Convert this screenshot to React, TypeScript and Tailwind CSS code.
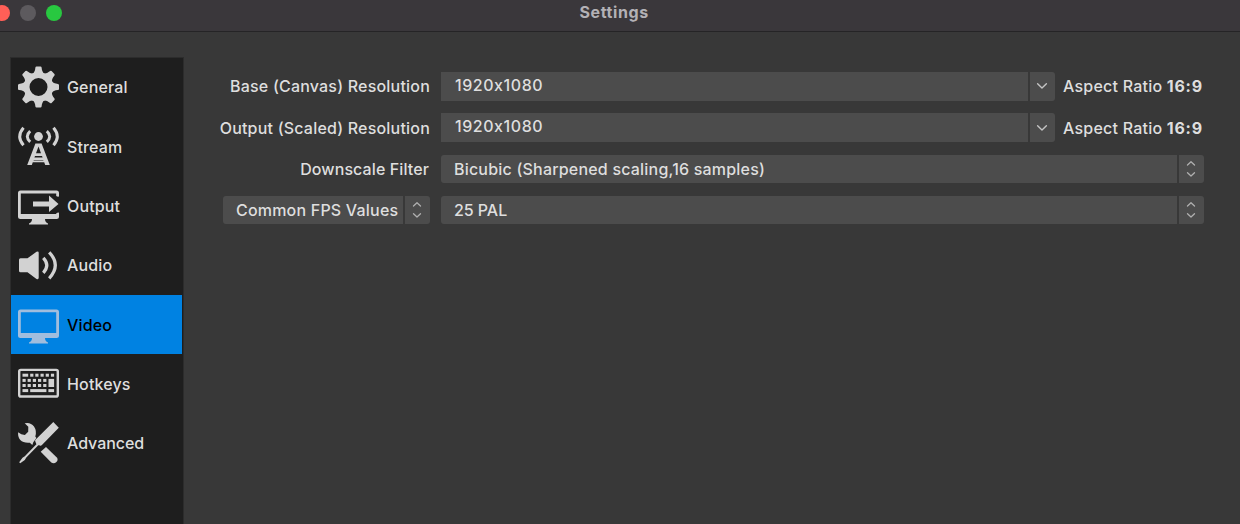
import type { ReactNode } from "react";

const INK = "#d2d2d2";

function Icon({ children }: { children: ReactNode }) {
  return (
    <svg width="42" height="42" viewBox="0 0 42 42" fill={INK} className="shrink-0 overflow-visible">
      {children}
    </svg>
  );
}

function GearIcon() {
  return (
    <Icon>
      {[0, 45, 90, 135, 180, 225, 270, 315].map((a) => (
        <path key={a} transform={`rotate(${a} 20.5 21)`} d="M14 8.5Q17.1 6.2 17.4 1.5Q17.6.5 18.5.5H22.5Q23.4.5 23.6 1.5Q23.9 6.2 27 8.5Z" />
      ))}
      <circle cx="20.5" cy="21" r="11.9" fill="none" stroke={INK} strokeWidth="5.8" />
    </Icon>
  );
}

function StreamIcon() {
  return (
    <Icon>
      <circle cx="20.5" cy="10.5" r="4.4" />
      <g fill="none" stroke={INK} strokeWidth="3">
        <path d="M5.5 1.7Q-2 10.5 5.5 19.3M35.5 1.7Q43 10.5 35.5 19.3" />
        <path d="M12.2 5.2Q6.4 10.5 12.2 15.8M28.8 5.2Q34.6 10.5 28.8 15.8" />
      </g>
      <path fillRule="evenodd" d="M17.4 17.4H23.6L31.8 39H27.2L26.2 36.3H14.8L13.8 39H9.2ZM20.5 20.5L18 27.2H23ZM17 30L16.4 31.6H24.6L24 30ZM15.9 33.9L15.4 34.6H25.6L25.1 33.9Z" />
    </Icon>
  );
}

function OutputIcon() {
  return (
    <Icon>
      <g transform="translate(0 .6)">
        <path fillRule="evenodd" d="M2.5 5H38.5Q41 5 41 7.5V13L38.2 10.5V7.8H2.8V28.5H38.2V28L41 25.5V31Q41 33.5 38.5 33.5H27Q27 36.5 30 38V39H11V38Q14 36.5 14 33.5H2.5Q0 33.5 0 31V7.5Q0 5 2.5 5Z" />
        <path d="M38 11H42V27H38Z" fill="#1e1e1e" />
        <path d="M15 15.8H31V10L40.5 18.3L31 26.5V20.8H15Z" />
      </g>
    </Icon>
  );
}

function AudioIcon() {
  return (
    <Icon>
      <g transform="translate(0 .8)">
        <path d="M2.5 13.5H9.5L18.5 7Q20.7 6 20.7 8V33Q20.7 35 18.5 34.2L9.5 27.5H2.5Q1 27.5 1 26V15Q1 13.5 2.5 13.5Z" />
        <path fill="none" stroke={INK} strokeWidth="3.2" d="M25.3 13Q32.3 20.5 25.3 28M31.2 7.5Q43.4 20.5 31.2 33.5" />
      </g>
    </Icon>
  );
}

function VideoIcon() {
  return (
    <svg width="42" height="42" viewBox="0 0 42 42" fill="#a1bddd" className="shrink-0">
      <path transform="translate(0 .5)" fillRule="evenodd" d="M2.5 5H38.5Q41 5 41 7.5V31Q41 33.5 38.5 33.5H27Q27 36.5 30 38V39H11V38Q14 36.5 14 33.5H2.5Q0 33.5 0 31V7.5Q0 5 2.5 5ZM2.8 7.8V28.5H38.2V7.8Z" />
    </svg>
  );
}

const KEYS: [number, number, number][] = [
  [4.5, 11.2, 5.7], [12.2, 11.2, 3.2], [17.3, 11.2, 3.2], [22.5, 11.2, 3.2], [27.7, 11.2, 3.2], [32.9, 11.2, 3.2],
  [4.5, 16.4, 3.2], [9.6, 16.4, 3.2], [14.8, 16.4, 3.2], [20, 16.4, 3.2], [25.2, 16.4, 3.2],
  [4.5, 21.5, 3.2], [9.6, 21.5, 3.2], [14.8, 21.5, 3.2], [20, 21.5, 3.2], [25.2, 21.5, 3.2],
  [4.5, 26.6, 5.7], [12.2, 26.6, 16.2], [30.4, 26.6, 5.7],
];

function KeyboardIcon() {
  return (
    <Icon>
      <g transform="translate(0 -.5)">
        <rect x="1.2" y="7.4" width="38.6" height="26.6" rx="1.6" fill="none" stroke={INK} strokeWidth="2.4" />
        {KEYS.map(([x, y, w]) => (
          <rect key={`${x}-${y}`} x={x} y={y} width={w} height="3" />
        ))}
        <rect x="30.5" y="16.4" width="5.6" height="8.1" />
      </g>
    </Icon>
  );
}

function ToolsIcon() {
  return (
    <Icon>
      <path d="M35.3 0L40.8 5.7L23.7 23.3Q22.5 24.3 21.4 23.2L20.3 23.2L8.3 35.5L6.8 38L2.2 41.3L1.2 40.3L4.5 35.8L6.8 34.3L18.4 22.3L17.4 19.8Q16.6 18.7 17.7 17.6Z" />
      <path d="M6.7 1.3Q12.5-.2 16 4.6Q19 9 17.3 14.4L18.4 16L15.3 20.2L14.3 23L11.8 20.7Q5.5 21.3 2.3 18Q-.6 14.5 .2 10.2L3.3 12.3L6.9 13.1L10.2 9.8L10.3 4.8Z" />
      <path d="M28 25L38.8 35.4Q40.6 37.6 38.4 40Q36 42.4 33.3 40.6L22.7 29.8Z" />
    </Icon>
  );
}

function NavItem({ icon, children, active = false }: { icon: ReactNode; children: ReactNode; active?: boolean }) {
  return (
    <li className={`flex h-[59.33px] items-center gap-[7px] pl-[7px] ${active ? "bg-[#0082e2] text-black" : "text-[#dedede]"}`}>
      {icon}
      {children}
    </li>
  );
}

function Chevrons() {
  return (
    <svg width="10" height="18" viewBox="0 0 10 18" fill="none" stroke="#b0b0b0" strokeWidth="1.3" strokeLinecap="round" strokeLinejoin="round">
      <path d="M1.5 5L5 1.8L8.5 5M1.5 12.8L5 16L8.5 12.8" />
    </svg>
  );
}

function Select({ children }: { children: ReactNode }) {
  return (
    <div className="flex h-[28.5px] w-full gap-[1.5px]">
      <div className="flex flex-1 items-center rounded-l-[3px] bg-[#4c4c4c] pl-[13px] whitespace-nowrap">{children}</div>
      <div className="flex w-[25.5px] items-center justify-center rounded-r-[3px] bg-[#4c4c4c]">
        <Chevrons />
      </div>
    </div>
  );
}

function Combo({ children }: { children: ReactNode }) {
  return (
    <div className="flex h-[28.5px] w-[614px] shrink-0 gap-[1.5px]">
      <div className="flex flex-1 items-center bg-[#4c4c4c] pb-[3px] pl-[14px] tracking-[0.55px]">{children}</div>
      <div className="flex w-[25.5px] items-center justify-center rounded-r-[3px] bg-[#4c4c4c]">
        <svg width="12" height="8" viewBox="0 0 12 8" fill="none" stroke="#c4c4c4" strokeWidth="1.4" strokeLinecap="round" strokeLinejoin="round">
          <path d="M1.6 1.7L6 6L10.4 1.7" />
        </svg>
      </div>
    </div>
  );
}

function Row({ label, children }: { label: ReactNode; children: ReactNode }) {
  return (
    <div className="flex h-[28.5px] items-center gap-[11px]">
      <div className="flex w-[210px] shrink-0 justify-end whitespace-nowrap">{label}</div>
      <div className="flex flex-1 items-center">{children}</div>
    </div>
  );
}

function Ratio() {
  return (
    <span className="ml-2 tracking-[0.22px] whitespace-nowrap">
      Aspect Ratio <b className="font-bold tracking-[0.75px]">16:9</b>
    </span>
  );
}

export default function App() {
  return (
    <div className="flex h-[524px] w-[1240px] flex-col overflow-hidden bg-[#383838] font-['Inter',sans-serif] text-[16px] leading-5 font-[450] text-[#dedede]">
      <header className="flex h-[32px] shrink-0 items-center border-b-[1.5px] border-[#252426] bg-[#3a373b] pb-[5px]">
        <div className="-ml-[6px] flex w-[68px] gap-[10px]">
          <i className="size-4 rounded-full bg-[#ff5f57]" />
          <i className="size-4 rounded-full bg-[#5d5a5e]" />
          <i className="size-4 rounded-full bg-[#28c840]" />
        </div>
        <h1 className="ml-[517.5px] pb-[2px] text-[16px] font-bold tracking-[0.6px] text-[#b3b1b5]">Settings</h1>
      </header>
      <main className="flex flex-1 pl-[10px]">
        <nav className="mt-[24.7px] w-[173.5px] shrink-0 border border-b-0 border-[#2c2c2c] bg-[#1e1e1e] pr-[0.5px] tracking-[0.15px]">
          <ul>
            <NavItem icon={<GearIcon />}>General</NavItem>
            <NavItem icon={<StreamIcon />}>Stream</NavItem>
            <NavItem icon={<OutputIcon />}>Output</NavItem>
            <NavItem icon={<AudioIcon />}>Audio</NavItem>
            <NavItem icon={<VideoIcon />} active>Video</NavItem>
            <NavItem icon={<KeyboardIcon />}>Hotkeys</NavItem>
            <NavItem icon={<ToolsIcon />}><span className="tracking-[-0.05px]">Advanced</span></NavItem>
          </ul>
        </nav>
        <section className="mt-10 ml-[36.5px] flex w-[984px] flex-col gap-[12.8px] tracking-[0.2px]">
          <Row label="Base (Canvas) Resolution">
            <Combo>1920x1080</Combo>
            <Ratio />
          </Row>
          <Row label="Output (Scaled) Resolution">
            <Combo>1920x1080</Combo>
            <Ratio />
          </Row>
          <Row label={<span className="pr-px tracking-[0.1px]">Downscale Filter</span>}>
            <Select>Bicubic (Sharpened scaling,16 samples)</Select>
          </Row>
          <Row
            label={
              <div className="w-[207px]">
                <Select>Common FPS Values</Select>
              </div>
            }
          >
            <Select><span className="tracking-[-0.05px]">25 PAL</span></Select>
          </Row>
        </section>
      </main>
    </div>
  );
}
